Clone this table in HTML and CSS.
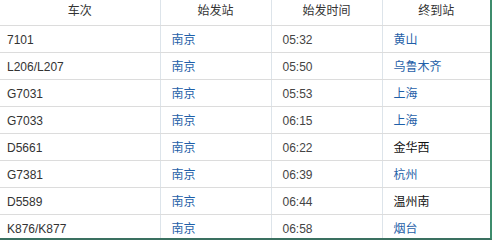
FILE: index.html
```html
<!DOCTYPE html>
<html lang="zh-CN">
<head>
<meta charset="utf-8">
<link rel="stylesheet" href="styles.css">
</head>
<body>
<div class="frame">
<table class="trains">
  <colgroup>
    <col class="c1"><col class="c2"><col class="c3"><col class="c4">
  </colgroup>
  <thead>
    <tr><th>车次</th><th>始发站</th><th>始发时间</th><th>终到站</th></tr>
  </thead>
  <tbody>
    <tr><td class="num">7101</td><td><a class="lnk">南京</a></td><td class="time">05:32</td><td><a class="lnk">黄山</a></td></tr>
    <tr><td class="num">L206/L207</td><td><a class="lnk">南京</a></td><td class="time">05:50</td><td><a class="lnk">乌鲁木齐</a></td></tr>
    <tr><td class="num">G7031</td><td><a class="lnk">南京</a></td><td class="time">05:53</td><td><a class="lnk">上海</a></td></tr>
    <tr><td class="num">G7033</td><td><a class="lnk">南京</a></td><td class="time">06:15</td><td><a class="lnk">上海</a></td></tr>
    <tr><td class="num">D5661</td><td><a class="lnk">南京</a></td><td class="time">06:22</td><td class="plain">金华西</td></tr>
    <tr><td class="num">G7381</td><td><a class="lnk">南京</a></td><td class="time">06:39</td><td><a class="lnk">杭州</a></td></tr>
    <tr><td class="num">D5589</td><td><a class="lnk">南京</a></td><td class="time">06:44</td><td class="plain">温州南</td></tr>
    <tr><td class="num">K876/K877</td><td><a class="lnk">南京</a></td><td class="time">06:58</td><td><a class="lnk">烟台</a></td></tr>
  </tbody>
</table>
</div>
</body>
</html>
```
FILE: styles.css
```css
html, body {
  margin: 0;
  padding: 0;
  background: #ffffff;
}
.frame {
  width: 490px;
  height: 238px;
  border-right: 2px solid #3d8c6c;
  border-bottom: 2px solid #3a7060;
  overflow: hidden;
}
.trains {
  width: 490px;
  border-collapse: collapse;
  table-layout: fixed;
  font-family: "Liberation Sans", Arial, "Noto Sans CJK SC", sans-serif;
  font-size: 12px;
  line-height: 14px;
  color: #333333;
}
.c1 { width: 160px; }
.c2 { width: 111px; }
.c3 { width: 111px; }
.c4 { width: 108px; }
.trains th {
  height: 25px;
  box-sizing: border-box;
  padding: 0 0 2px 0;
  font-weight: normal;
  font-size: 12px;
  color: #333333;
  text-align: center;
  vertical-align: middle;
  border-bottom: 1px solid #dcdcdc;
  border-left: 1px solid #dde4ea;
}
.trains td {
  height: 27px;
  padding: 2px 0 0 11px;
  box-sizing: border-box;
  vertical-align: middle;
  border-bottom: 1px solid #dcdcdc;
  border-left: 1px solid #dde4ea;
  white-space: nowrap;
}
.trains th:first-child, .trains td:first-child {
  border-left: none;
}
.trains td.num {
  padding-left: 7px;
  color: #333333;
}
.trains td.time {
  color: #444444;
}
.lnk {
  color: #1f5fa8;
  text-decoration: none;
}
.plain {
  color: #111111;
}
```
